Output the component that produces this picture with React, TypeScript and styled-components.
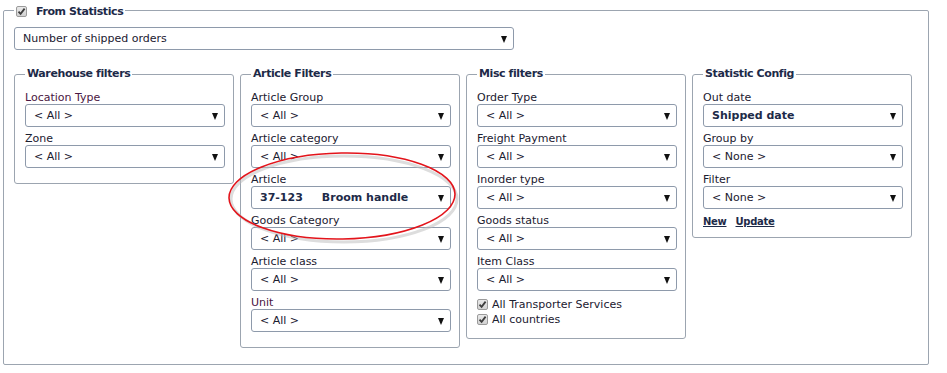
import styled, { createGlobalStyle } from "styled-components";

const GlobalStyle = createGlobalStyle`
  body {
    margin: 0;
    background: #fff;
    font-family: "DejaVu Sans", Verdana, sans-serif;
  }
`;

type Field = { label: string; value: string; bold?: boolean; tone?: "plum" };

const warehouse: Field[] = [
  { label: "Location Type", value: "< All >", tone: "plum" },
  { label: "Zone", value: "< All >" },
];

const article: Field[] = [
  { label: "Article Group", value: "< All >" },
  { label: "Article category", value: "< All >" },
  { label: "Article", value: "37-123|Broom handle", bold: true },
  { label: "Goods Category", value: "< All >" },
  { label: "Article class", value: "< All >" },
  { label: "Unit", value: "< All >", tone: "plum" },
];

const misc: Field[] = [
  { label: "Order Type", value: "< All >" },
  { label: "Freight Payment", value: "< All >" },
  { label: "Inorder type", value: "< All >" },
  { label: "Goods status", value: "< All >" },
  { label: "Item Class", value: "< All >" },
];

const config: Field[] = [
  { label: "Out date", value: "Shipped date", bold: true },
  { label: "Group by", value: "< None >" },
  { label: "Filter", value: "< None >" },
];

const Check = () => (
  <CheckBox>
    <svg width="9" height="9" viewBox="0 0 9 9">
      <path d="M1.5 4.6 L3.6 6.8 L7.6 1.6" fill="none" stroke="#3e3e3e" strokeWidth="1.8" />
    </svg>
  </CheckBox>
);

const Select = ({ value, bold, wide }: { value: string; bold?: boolean; wide?: boolean }) => {
  const parts = value.split("|");
  return (
    <SelectBox $bold={bold} $wide={wide}>
      <SelectText>
        {parts.length > 1 ? (
          <>
            <Code>{parts[0]}</Code>
            {parts[1]}
          </>
        ) : (
          value
        )}
      </SelectText>
      <Arrow />
    </SelectBox>
  );
};

const FieldList = ({ items }: { items: Field[] }) => (
  <>
    {items.map((f) => (
      <Row key={f.label}>
        <Label $tone={f.tone}>{f.label}</Label>
        <Select value={f.value} bold={f.bold} />
      </Row>
    ))}
  </>
);

export default function App() {
  return (
    <Page>
      <GlobalStyle />
      <Outer>
        <OuterLegend>
          <Check />
          From Statistics
        </OuterLegend>
        <Select value="Number of shipped orders" wide />
        <Panels>
          <Group $pb={14}>
            <GroupLegend>Warehouse filters</GroupLegend>
            <FieldList items={warehouse} />
          </Group>
          <Group $pb={14}>
            <GroupLegend>Article Filters</GroupLegend>
            <FieldList items={article} />
          </Group>
          <Group $pb={11}>
            <GroupLegend>Misc filters</GroupLegend>
            <FieldList items={misc} />
            <Checks>
              <CheckRow>
                <Check />
                All Transporter Services
              </CheckRow>
              <CheckRow>
                <Check />
                All countries
              </CheckRow>
            </Checks>
          </Group>
          <Group $pb={8}>
            <GroupLegend>Statistic Config</GroupLegend>
            <FieldList items={config} />
            <Links>
              <Link>New</Link>
              <Link>Update</Link>
            </Links>
          </Group>
        </Panels>
      </Outer>
      <Marker width="947" height="373" viewBox="0 0 947 373">
        <ellipse cx="343" cy="197" rx="113" ry="43" fill="none" stroke="#bbb" strokeOpacity="0.5" strokeWidth="3" transform="translate(1 2)" />
        <ellipse cx="342" cy="196" rx="113" ry="43" fill="none" stroke="#e3141b" strokeWidth="1.6" transform="rotate(-1 342 196)" />
      </Marker>
    </Page>
  );
}

const Page = styled.div`
  position: relative;
  width: 947px;
  height: 373px;
  padding-top: 1px;
  box-sizing: border-box;
  overflow: hidden;
`;

const Outer = styled.fieldset`
  margin: 0 0 0 3px;
  width: 926px;
  box-sizing: border-box;
  padding: 8px 10px 16px 10px;
  border: 1px solid #9ca5b0;
  border-radius: 2px;
  min-inline-size: 0;
`;

const OuterLegend = styled.legend`
  padding: 2px 2px 0 2px;
  box-sizing: border-box;
  display: flex;
  align-items: center;
  gap: 9px;
  height: 18px;
  font-size: 11px;
  font-weight: bold;
  letter-spacing: -0.4px;
  color: #1d2a48;
`;

const CheckBox = styled.span`
  width: 11px;
  height: 11px;
  box-sizing: border-box;
  border: 1px solid #9b9b9b;
  border-radius: 2px;
  background: linear-gradient(#e9e9e9, #d2d2d2);
  display: inline-flex;
  align-items: center;
  justify-content: center;
  flex: none;
`;

const SelectBox = styled.div<{ $bold?: boolean; $wide?: boolean }>`
  width: ${(p) => (p.$wide ? "500px" : "200px")};
  height: 23px;
  box-sizing: border-box;
  border: 1px solid #8e9aab;
  border-radius: 3px;
  background: #fff;
  padding: 0 6px 0 8px;
  display: flex;
  align-items: center;
  justify-content: space-between;
  font-size: 11px;
  font-weight: ${(p) => (p.$bold ? "bold" : "normal")};
  color: ${(p) => (p.$bold ? "#1d2a48" : "#1b2030")};
`;

const SelectText = styled.span`
  white-space: pre;
`;

const Code = styled.span`
  margin-right: 19px;
`;

const Arrow = styled.span`
  width: 0;
  height: 0;
  border-left: 3.5px solid transparent;
  border-right: 3.5px solid transparent;
  border-top: 7px solid #111;
  margin-top: 1px;
`;

const Panels = styled.div`
  display: flex;
  align-items: flex-start;
  gap: 6px;
  margin-top: 16px;
`;

const Group = styled.fieldset<{ $pb: number }>`
  margin: 0;
  width: 220px;
  box-sizing: border-box;
  padding: 5px 8px ${(p) => p.$pb}px 10px;
  border: 1px solid #9ca5b0;
  border-radius: 3px;
  min-inline-size: 0;
`;

const GroupLegend = styled.legend`
  padding: 0 2px;
  height: 16px;
  line-height: 16px;
  font-size: 11px;
  font-weight: bold;
  letter-spacing: -0.4px;
  color: #1d2a48;
`;

const Row = styled.div`
  display: flex;
  flex-direction: column;
  margin-bottom: 1px;
`;

const Label = styled.div<{ $tone?: "plum" }>`
  height: 17px;
  display: flex;
  align-items: flex-end;
  line-height: 13px;
  font-size: 11px;
  color: ${(p) => (p.$tone === "plum" ? "#4a1642" : "#1b2030")};
`;

const Checks = styled.div`
  margin-top: 6px;
  display: flex;
  flex-direction: column;
`;

const CheckRow = styled.div`
  display: flex;
  align-items: center;
  gap: 4px;
  height: 15px;
  font-size: 11px;
  color: #1b2030;
`;

const Links = styled.div`
  margin-top: 6px;
  display: flex;
  gap: 9px;
  line-height: 14px;
`;

const Link = styled.a`
  font-size: 10px;
  font-weight: bold;
  letter-spacing: -0.3px;
  text-decoration: underline;
  color: #1d2a48;
  cursor: pointer;
`;

const Marker = styled.svg`
  position: absolute;
  left: 0;
  top: 0;
  pointer-events: none;
`;
